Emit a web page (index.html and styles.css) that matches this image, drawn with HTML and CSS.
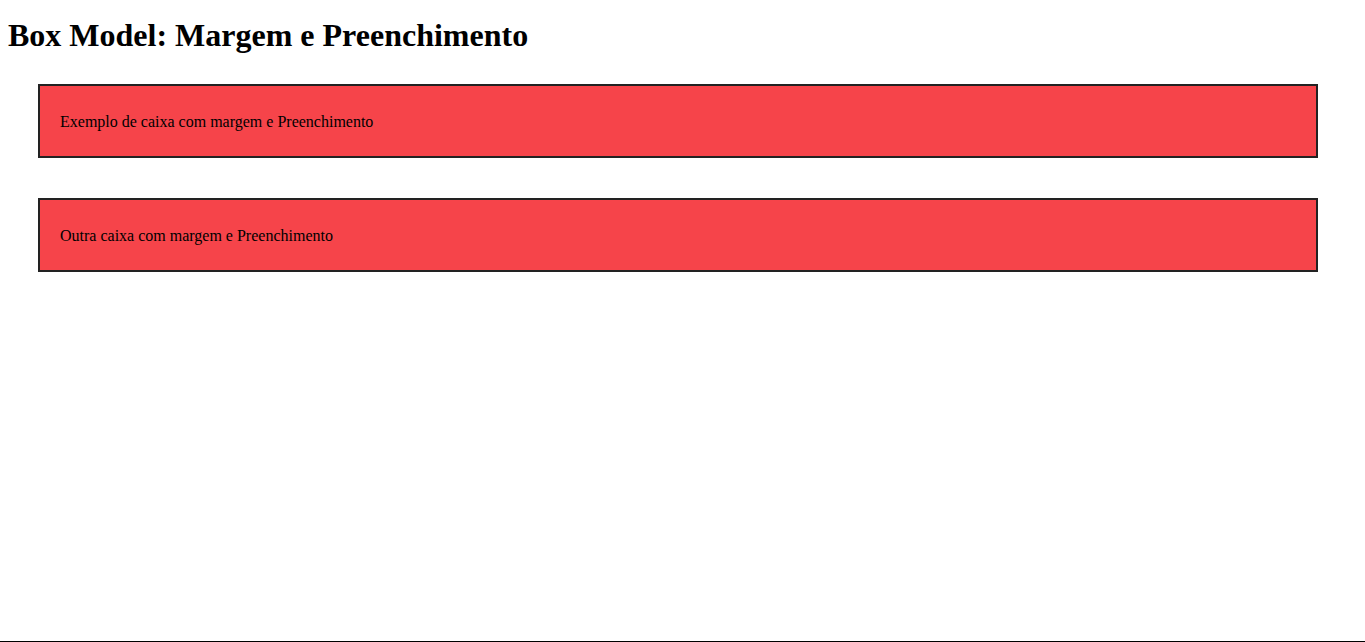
FILE: index.html
```html
<!DOCTYPE html>
<html lang="pt">
<head>
<meta charset="utf-8">
<title>Box Model</title>
<link rel="stylesheet" href="styles.css">
</head>
<body>
<h1 class="title">Box Model: Margem e Preenchimento</h1>
<div class="boxes">
  <div class="box"><p class="box-text">Exemplo de caixa com margem e Preenchimento</p></div>
  <div class="box"><p class="box-text">Outra caixa com margem e Preenchimento</p></div>
</div>
</body>
</html>
```
FILE: styles.css
```css
html, body {
  height: 100%;
}
body {
  margin: 0;
  padding: 8px;
  box-sizing: border-box;
  font-family: "Liberation Serif", "Times New Roman", serif;
  color: #000;
  background: #fff;
}
body::after {
  content: "";
  position: fixed;
  left: 0;
  right: 0;
  bottom: 0;
  height: 1px;
  background: #000;
}
.title {
  font-size: 32px;
  font-weight: bold;
  line-height: 36px;
  margin: 9px 0 0;
}
.boxes {
  display: flex;
  flex-direction: column;
  gap: 40px;
  margin: 31px 0 0 30px;
}
.box {
  box-sizing: border-box;
  width: 1280px;
  background: #f6444a;
  border: 2px solid #222;
  padding: 10px 20px;
}
.box-text {
  margin: 17px 0 15px;
  font-size: 16px;
  line-height: 18px;
}
```
